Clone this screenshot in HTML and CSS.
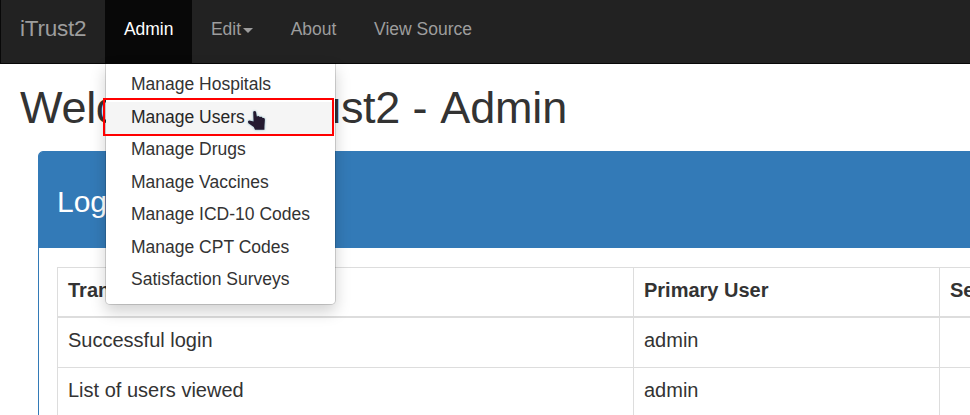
FILE: index.html
```html
<!DOCTYPE html>
<html lang="en">
<head>
<meta charset="utf-8">
<title>iTrust2 - Admin</title>
<link rel="stylesheet" href="styles.css">
</head>
<body>
<nav class="navbar">
  <a class="brand"><span>iTrust2</span></a>
  <div class="nav-item active">
    <span>Admin</span>
    <div class="menu">
      <a><span>Manage Hospitals</span></a>
      <a class="hover"><span>Manage Users</span></a>
      <a><span>Manage Drugs</span></a>
      <a><span>Manage Vaccines</span></a>
      <a><span>Manage ICD-10 Codes</span></a>
      <a><span>Manage CPT Codes</span></a>
      <a><span>Satisfaction Surveys</span></a>
      <div class="marker"></div>
      <svg class="cursor" width="20" height="22" viewBox="0 0 20 22"><path d="M6.2 1.8 Q7.7 .2 9 1.8 L9.8 6.6 L11.6 6 L12.8 7 L14.6 6.8 L15.6 8 L17.2 8 L17.9 9.4 L17.4 16.4 L17.4 19.8 L8 19.8 L6.8 17 L1.4 13.2 Q.2 11.2 2.2 10.4 L6.6 11.6 Z"/></svg>
    </div>
  </div>
  <a class="nav-item"><span>Edit</span><i class="caret"></i></a>
  <a class="nav-item"><span>About</span></a>
  <a class="nav-item"><span>View Source</span></a>
</nav>
<main>
  <h1><span class="greeting">Welcome to iTrust2</span> - <span class="role">Admin</span></h1>
  <section class="panel">
    <h2>Log Entries</h2>
    <table>
      <thead><tr><th class="type">Transaction Type</th><th class="user">Primary User</th><th>Secondary User</th></tr></thead>
      <tbody>
        <tr><td>Successful login</td><td>admin</td><td></td></tr>
        <tr><td>List of users viewed</td><td>admin</td><td></td></tr>
      </tbody>
    </table>
  </section>
</main>
</body>
</html>
```
FILE: styles.css
```css
* { box-sizing: border-box; }
html { overflow: hidden; }
body {
  margin: 0;
  height: 415px;
  overflow: hidden;
  background: #fff;
  color: #333;
  font: 20px/28.57px "Liberation Sans", Arial, sans-serif;
}
.navbar {
  display: flex;
  height: 64px;
  background: #222;
  border: solid #080808;
  border-width: 0 0 1px 1px;
  color: #9d9d9d;
  font-size: 17.5px;
  line-height: 25px;
}
.brand {
  width: 104px;
  padding: 16px 0 0 19px;
  font-size: 22.5px;
  letter-spacing: -.25px;
}
.nav-item {
  position: relative;
  display: flex;
  padding: 17px 18.75px 0 18.9px;
}
.nav-item span { white-space: nowrap; }
.active { width: 87px; background: #080808; color: #fff; }
.caret {
  margin: 11px 0 0 2px;
  width: 10px;
  height: 5px;
  border: solid transparent;
  border-width: 5px 5px 0;
  border-top-color: #9d9d9d;
}
.menu {
  position: absolute;
  z-index: 5;
  top: 63px;
  left: 0;
  width: 231px;
  height: 242px;
  padding: 5px 0;
  background: #fff;
  background-clip: padding-box;
  border: 1px solid rgba(0, 0, 0, .15);
  border-radius: 0 0 5px 5px;
  box-shadow: 0 7px 15px rgba(0, 0, 0, .175);
  color: #333;
}
.menu a {
  display: block;
  height: 32.5px;
  padding: 3.2px 25px;
}
.menu .hover { background: #f5f5f5; color: #262626; }
.marker {
  position: absolute;
  top: 34px;
  left: -3px;
  width: 231px;
  height: 38px;
  border: 2px solid #f00;
}
.cursor {
  position: absolute;
  top: 46px;
  left: 141px;
  fill: #241a30;
  filter: drop-shadow(0 0 1px #7eb6c4);
}
h1 {
  margin: 19px 0 0 20px;
  font-size: 45px;
  line-height: 49px;
  font-weight: 400;
  letter-spacing: -.1px;
  white-space: nowrap;
}
.greeting { letter-spacing: -.28px; }
.role { margin-left: .5px; letter-spacing: -.15px; }
.panel {
  width: 1300px;
  height: 400px;
  margin: 19px 0 0 38px;
  border: 1px solid #337ab7;
  border-radius: 5px;
}
h2 {
  height: 96px;
  margin: 0;
  padding: 33px 18px 0;
  background: #337ab7;
  border-radius: 3px 3px 0 0;
  color: #fff;
  font-size: 30px;
  line-height: 33px;
  font-weight: 400;
}
table {
  table-layout: fixed;
  width: 1250px;
  margin: 19px 0 0 18px;
  border-collapse: separate;
  border-spacing: 0;
  border: solid #ddd;
  border-width: 1px 0 0 1px;
}
th, td {
  height: 50px;
  padding: 8px 10px 10px;
  border: solid #ddd;
  border-width: 0 1px 1px 0;
  text-align: left;
  vertical-align: top;
}
th { border-bottom-width: 2px; }
.type { width: 576px; }
.user { width: 306px; }
```
